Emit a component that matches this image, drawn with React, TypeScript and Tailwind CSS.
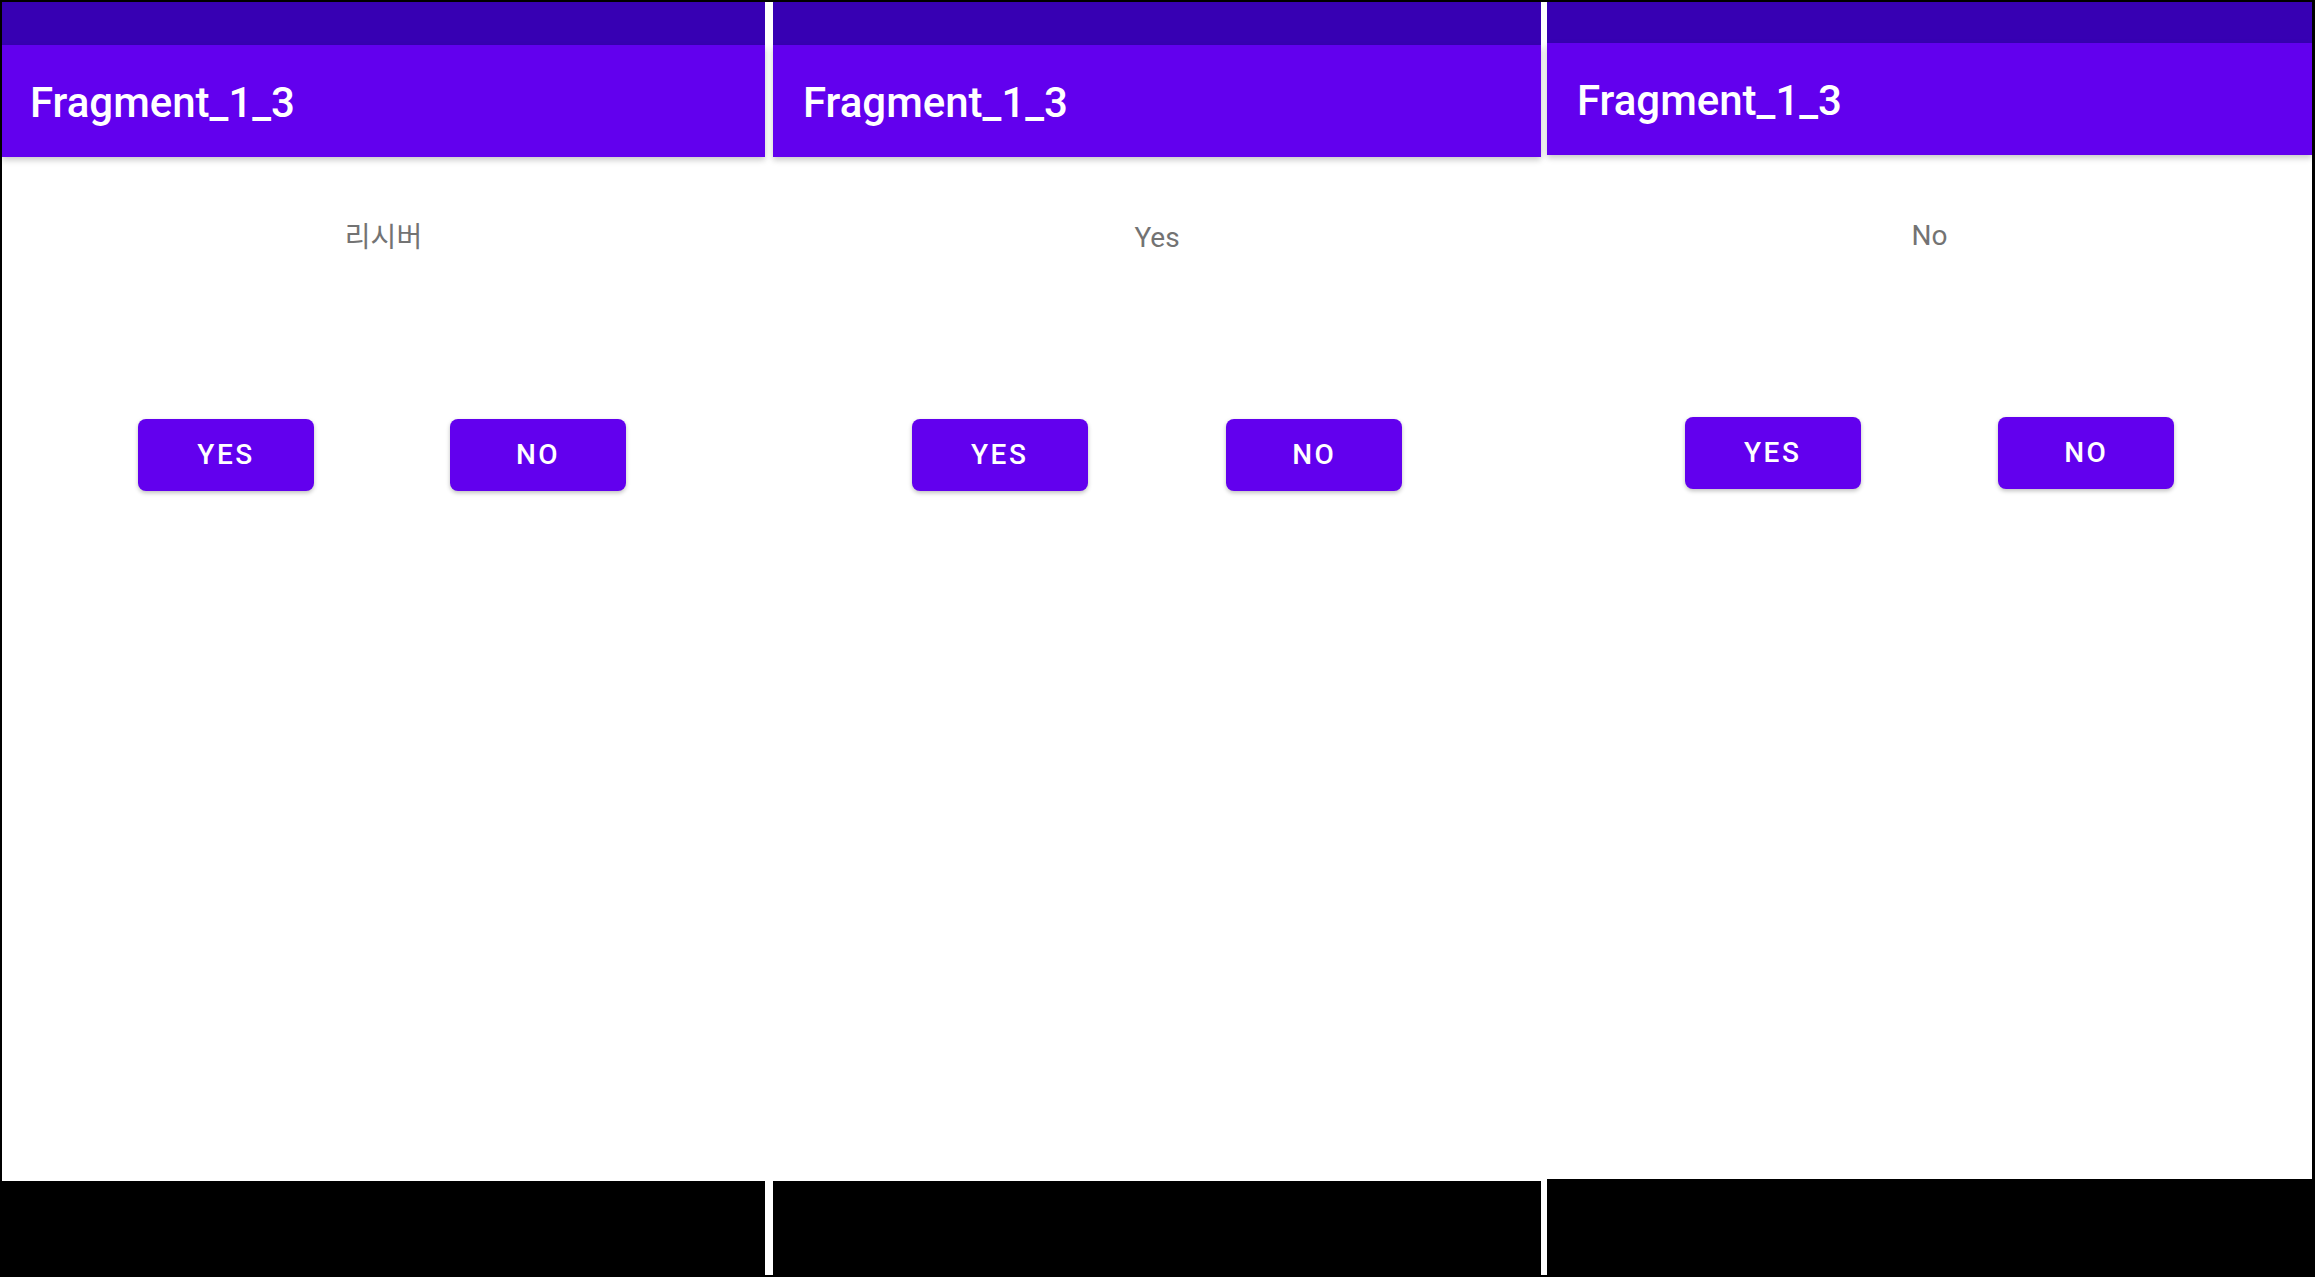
const panels = [
  { label: "리시버", width: "w-[763px]", status: "h-[43px]", nav: "h-[94px]", pad: "pl-[28px]", row: "pr-[3px]" },
  { label: "Yes", width: "w-[768px]", status: "h-[43px]", nav: "h-[94px]", pad: "pl-[30px]", row: "" },
  { label: "No", width: "w-[765px]", status: "h-[41px]", nav: "h-[96px]", pad: "pl-[30px]", row: "" },
];

type PhoneProps = { label: string; width: string; status: string; nav: string; pad: string; row: string };

function Phone({ label, width, status, nav, pad, row }: PhoneProps) {
  return (
    <div className={`${width} flex h-full flex-col bg-white`}>
      <div className={`${status} shrink-0 bg-[#3700B3]`} />
      <div className={`relative z-10 flex h-[112px] shrink-0 items-center bg-[#6200EE] ${pad} pt-[3px] shadow-[0_3px_6px_rgba(0,0,0,0.22)]`}>
        <span className="text-[42px] font-medium text-white">Fragment_1_3</span>
      </div>
      <div className="flex flex-1 flex-col items-center bg-white">
        <p className="mt-[64px] text-[28px] leading-[33px] text-[#737373]">{label}</p>
        <div className={`mt-[165px] flex w-full justify-evenly ${row}`}>
          <button className="flex h-[72px] w-[176px] items-center justify-center rounded-[8px] bg-[#6200EE] text-[28px] font-medium tracking-[2.5px] text-white shadow-[0_2px_4px_rgba(0,0,0,0.25)]">
            YES
          </button>
          <button className="flex h-[72px] w-[176px] items-center justify-center rounded-[8px] bg-[#6200EE] text-[28px] font-medium tracking-[2.5px] text-white shadow-[0_2px_4px_rgba(0,0,0,0.25)]">
            NO
          </button>
        </div>
      </div>
      <div className={`${nav} shrink-0 bg-black`} />
    </div>
  );
}

export default function App() {
  return (
    <div
      className="h-[1277px] w-[2315px] bg-black pb-[2px] pl-[2px] pr-[3px] pt-[2px]"
      style={{ fontFamily: "Roboto, 'Noto Sans CJK KR', sans-serif" }}
    >
      <div className="flex h-full bg-white">
        <Phone {...panels[0]} />
        <div className="w-[8px] shrink-0" />
        <Phone {...panels[1]} />
        <div className="w-[6px] shrink-0" />
        <Phone {...panels[2]} />
      </div>
    </div>
  );
}
